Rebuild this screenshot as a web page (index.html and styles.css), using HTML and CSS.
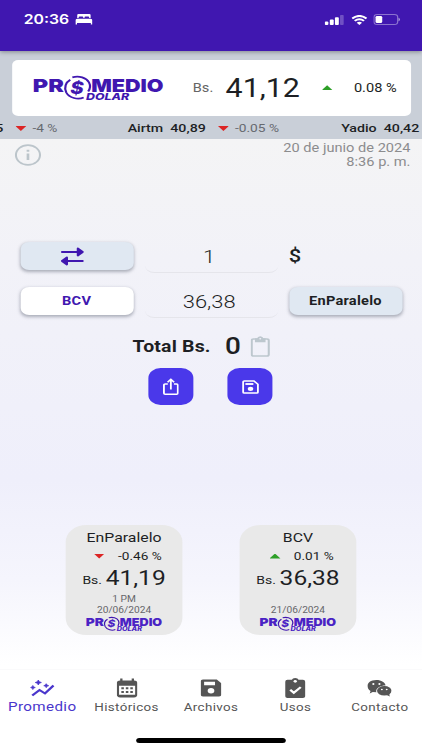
FILE: index.html
```html
<!DOCTYPE html>
<html lang="es">
<head>
    <meta charset="UTF-8">
    <meta name="viewport" content="width=device-width, initial-scale=1.0">
    <title>Promedio Dolar</title>
    <link rel="stylesheet" href="styles.css">
</head>
<body>
    <div class="app">
        <header class="status-bar">
            <span class="time">20:36</span>
            <svg class="bed" width="14" height="11" viewBox="0 0 14 11"><path fill="#fff" d="M2.500 0h9q1 0 1 1v3h-1.200V3.200q0-.8-.8-.8H8.300q-.8 0-.8.8V4h-1v-.8q0-.8-.8-.8H3.500q-.8 0-.8.8V4H1.500V1q0-1 1-1zM1.500 4.700h11q1.500.3 1.500 1.500v4.300h-1.300V9H1.300v1.500H0V6.200q0-1.200 1.500-1.500z"/></svg>
            <div class="status-icons">
                <svg width="16" height="10" viewBox="0 0 16 10" fill="#fff"><rect y="6.500" width="3" height="3.500" rx="1"/><rect x="4.200" y="4.600" width="3.200" height="5.400" rx=".8"/><rect x="8.400" y="2.300" width="3.200" height="7.700" rx=".8"/><rect x="12.600" width="3" height="10" rx=".8" opacity=".25"/></svg>
                <svg width="13" height="10" viewBox="0 0 13 10" fill="none" stroke="#fff" stroke-width="1.900"><path d="M.6 3.500Q6.500-1.700 12.400 3.500M2.700 5.900Q6.500 2.500 10.300 5.900"/><path fill="#fff" stroke="none" d="M4.300 7.700Q6.500 5.800 8.700 7.700L6.500 10z"/></svg>
                <svg width="22" height="11" viewBox="0 0 22 11"><rect x=".5" y=".5" width="19.500" height="10" rx="2.800" fill="none" stroke="#fff" stroke-opacity=".4"/><rect x="1.800" y="1.900" width="5.500" height="7.200" rx="1.300" fill="#fff"/><path fill="#fff" fill-opacity=".5" d="M20.700 3.700q1.300.5 1.300 1.800t-1.300 1.800z"/></svg>
            </div>
        </header>

        <section class="summary">
            <div class="summary-card">
                <svg class="logo" viewBox="0 0 106 24" preserveAspectRatio="none">
                    <g id="logo">
                        <text class="logo-main" x="-1" y="15.500" textLength="25.500" lengthAdjust="spacingAndGlyphs">PR</text>
                        <text class="logo-coin" x="29.700" y="17.600" textLength="11" lengthAdjust="spacingAndGlyphs">$</text>
                        <text class="logo-main" x="47" y="15.500" textLength="59.500" lengthAdjust="spacingAndGlyphs">MEDIO</text>
                        <path class="logo-ring" d="M31.500 1.300C37-.5 43 1.500 45.200 6.500C46.500 9.500 46 13 44.500 15.500M40.800 21.500C36 24 29 22 26.500 16.500C24.500 11.500 26 6.500 29.800 3.800"/>
                        <text class="logo-sub" x="42.700" y="23.600" textLength="35.500" lengthAdjust="spacingAndGlyphs">DOLAR</text>
                    </g>
                </svg>
                <span class="summary-currency">Bs.</span>
                <span class="summary-value">41,12</span>
                <span class="arrow up"></span>
                <span class="summary-change">0.08 %</span>
            </div>
            <div class="ticker">
                <span class="ticker-item first">5 <span class="arrow down"></span><span class="change">-4 %</span></span>
                <span class="ticker-item">Airtm&nbsp; 40,89 <span class="arrow down"></span><span class="change">-0.05 %</span></span>
                <span class="ticker-item last">Yadio&nbsp; 40,42</span>
            </div>
        </section>

        <main>
            <div class="info-row">
                <svg width="22" height="22" viewBox="0 0 22 22" fill="none" stroke="#bcc5cb" stroke-width="1.700"><circle cx="11" cy="11" r="9.900"/><path stroke-width="2.200" d="M11 9.500v6.500M11 5.800v2"/></svg>
                <div class="date">20 de junio de 2024<br>8:36 p. m.</div>
            </div>

            <div class="converter">
                <button class="rate-button tinted swap" aria-label="Cambiar">
                    <svg width="19" height="19" viewBox="0 0 19 19" fill="none" stroke="#4017b0" stroke-width="1.800" stroke-linecap="round" stroke-linejoin="round"><path d="M1 5h14M18 14H4"/><path fill="#4017b0" d="M14 1.500L18 5l-4 3.500zM5 10.500L1 14l4 3.500z"/></svg>
                </button>
                <div class="field">1</div>
                <span class="dollar">$</span>
                <button class="rate-button selected">BCV</button>
                <div class="field">36,38</div>
                <button class="rate-button tinted">EnParalelo</button>
            </div>

            <div class="total">
                <span class="total-label">Total Bs.</span>
                <span class="total-value">0</span>
                <svg width="16" height="21" viewBox="0 0 16 21" fill="none" stroke="#bdc7ce" stroke-width="1.700"><rect x="1" y="3" width="14" height="17" rx="1.500"/><path fill="#bdc7ce" d="M4.500 3H6Q6.500 1 8 1T10 3H11.500V5.500H4.500z"/><circle cx="8" cy="2.800" r=".8" fill="#f0f0f9" stroke="none"/></svg>
            </div>

            <div class="actions">
                <button class="action" aria-label="Compartir"><svg width="13" height="17" viewBox="0 0 13 17" fill="none" stroke="#fff" stroke-width="1.500"><path d="M4 6H1.800Q.8 6 .8 7V15.200Q.8 16.200 1.800 16.200H11.200Q12.200 16.200 12.200 15.200V7Q12.200 6 11.200 6H9M6.500 11.500V2M3.800 4.200L6.500 1.300L9.200 4.200"/></svg></button>
                <button class="action" aria-label="Guardar"><svg width="14" height="14" viewBox="0 0 15 15" fill="none" stroke="#fff" stroke-width="1.600"><path d="M2 1H10.500L14 4.500V13Q14 14 13 14H2Q1 14 1 13V2Q1 1 2 1z"/><path stroke-width="2" d="M3 4.300H10"/><circle cx="7.500" cy="9.500" r="2.400" fill="#fff" stroke="none"/></svg></button>
            </div>

            <div class="cards">
                <article class="card">
                    <h2>EnParalelo</h2>
                    <div class="card-change"><span class="arrow down"></span>-0.46 %</div>
                    <div class="card-value"><small>Bs.</small>41,19</div>
                    <div class="card-time">1 PM</div>
                    <div class="card-date">20/06/2024</div>
                    <svg class="logo" viewBox="0 0 106 24" preserveAspectRatio="none"><use href="#logo"/></svg>
                </article>
                <article class="card">
                    <h2>BCV</h2>
                    <div class="card-change"><span class="arrow up"></span>0.01 %</div>
                    <div class="card-value"><small>Bs.</small>36,38</div>
                    <div class="card-time"></div>
                    <div class="card-date">21/06/2024</div>
                    <svg class="logo" viewBox="0 0 106 24" preserveAspectRatio="none"><use href="#logo"/></svg>
                </article>
            </div>
        </main>

        <nav class="tabs">
            <a class="tab active">
                <svg width="20" height="18" viewBox="0 0 20 18" fill="none" stroke="currentColor" stroke-width="2"><path d="M1.500 16.500L7.500 11L12 14.500L19 6.500"/><path fill="currentColor" stroke-width=".7" d="M6.500 1L7.300 2.700L9 3.500L7.300 4.300L6.500 6L5.700 4.300L4 3.500L5.700 2.700zM2 6.500L2.600 7.900L4 8.500L2.600 9.100L2 10.500L1.400 9.100L0 8.500L1.400 7.900zM13 4.700L13.600 6L15 6.700L13.600 7.300L13 8.700L12.400 7.300L11 6.700L12.400 6z"/></svg>
                <span>Promedio</span>
            </a>
            <a class="tab">
                <svg width="17" height="19" viewBox="0 0 18 20"><path fill="currentColor" d="M3 0h2v2h8V0h2v2q3 0 3 3v12q0 3-3 3H3q-3 0-3-3V5q0-3 3-3z"/><path fill="#fff" d="M2 7.500h14v9.700H2z"/><path stroke="currentColor" stroke-width="2" stroke-dasharray="2.200 1.700" d="M4 10.300h10M4 14.300h10"/></svg>
                <span>Históricos</span>
            </a>
            <a class="tab">
                <svg width="17" height="17" viewBox="0 0 18 18"><path fill="currentColor" d="M2 0h12l4 4v12q0 2-2 2H2q-2 0-2-2V2q0-2 2-2z"/><path fill="#fff" d="M3 2.500h9.500v3.700H3z"/><circle cx="9" cy="12" r="2.900" fill="#fff"/></svg>
                <span>Archivos</span>
            </a>
            <a class="tab">
                <svg width="17.500" height="22" viewBox="0 0 18 22"><path fill="currentColor" d="M2 2h4q.5-2 3-2t3 2h4q2 0 2 2v16q0 2-2 2H2q-2 0-2-2V4q0-2 2-2z"/><circle cx="9" cy="3.700" r="1.500" fill="#fff"/><path fill="none" stroke="#fff" stroke-width="2.200" d="M4.500 13l3.200 3.300L14 10"/></svg>
                <span>Usos</span>
            </a>
            <a class="tab">
                <svg width="20" height="18" viewBox="0 0 20 18"><path fill="currentColor" d="M7.500 1C11.500 1 15 3.500 15 6.500C10 6.500 6.500 10 7.500 13.300L4.500 13L2 14.500L2.700 12C-2 8 0 1 7.500 1z"/><ellipse cx="14" cy="11.800" rx="6" ry="4.800" fill="currentColor"/><path fill="currentColor" d="M16 16l2.500 1.500-.5-3z"/><g fill="#fff"><circle cx="5" cy="5" r=".9"/><circle cx="10" cy="5" r=".9"/><circle cx="12" cy="10.500" r=".8"/><circle cx="16" cy="10.500" r=".8"/></g></svg>
                <span>Contacto</span>
            </a>
        </nav>
        <div class="home-indicator"></div>
    </div>
</body>
</html>
```
FILE: styles.css
```css
* {
    box-sizing: border-box;
}
body {
    margin: 0;
    overflow: hidden;
    background-color: #ffffff;
}
/* laid out at 347px, widened to fill a 422px screen */
.app {
    display: flex;
    flex-direction: column;
    width: 347px;
    height: 750px;
    overflow: hidden;
    transform: scaleX(1.21614);
    transform-origin: 0 0;
    font-family: Roboto, "Liberation Sans", sans-serif;
    font-size: 12px;
    color: #1d1f24;
    background: linear-gradient(#f4f4f5 139px, #f2f2f8 260px, #efeffb 480px, #f5f5fd 580px, #ffffff 665px);
}
svg {
    display: block;
    flex: none;
}
button {
    font-family: inherit;
    border: none;
    padding: 0;
    display: flex;
    align-items: center;
    justify-content: center;
}
.status-bar {
    height: 51px;
    flex: none;
    display: flex;
    align-items: flex-start;
    padding: 11px 18px 0 19.5px;
    background-color: #4017b0;
    box-shadow: 0 1px 4px rgba(0, 0, 0, 0.35);
    z-index: 1;
}
.time {
    width: 38px;
    font: 600 13px/17px Inter, sans-serif;
    color: #ffffff;
}
.bed {
    margin: 3px 0 0 4px;
}
.status-icons {
    display: flex;
    align-items: center;
    gap: 5.5px;
    margin: 3px 0 0 auto;
}
.summary {
    height: 88px;
    flex: none;
    background-color: #c9cfd8;
    padding-top: 9px;
}
.summary-card {
    height: 55.5px;
    margin: 0 9.5px;
    padding-left: 18px;
    display: flex;
    align-items: center;
    background-color: #ffffff;
    border-radius: 5px;
}
.logo {
    width: 106px;
    height: 24px;
    overflow: visible;
    fill: #4017b0;
}
.logo-main {
    font: 900 18px Inter, sans-serif;
}
.logo-coin {
    font: italic 800 17px Inter, sans-serif;
}
.logo-sub {
    font: italic 800 9.5px Inter, sans-serif;
}
.logo-ring {
    fill: none;
    stroke: #4017b0;
    stroke-width: 1.8;
}
.summary-currency {
    width: 27px;
    margin-left: 25px;
    color: #666666;
}
.summary-value {
    width: 79px;
    padding-top: 1px;
    font-size: 25px;
}
.summary-change {
    margin-left: 17.5px;
}
.arrow {
    display: inline-block;
    width: 9px;
    height: 5px;
    flex: none;
}
.up {
    background-color: #2d9f27;
    clip-path: polygon(50% 0, 100% 100%, 0 100%);
}
.down {
    background-color: #dc2525;
    clip-path: polygon(0 0, 100% 0, 50% 100%);
}
.ticker {
    height: 24px;
    padding-top: 1px;
    display: flex;
    align-items: center;
    overflow: hidden;
    white-space: nowrap;
    font-size: 11.7px;
}
.ticker-item {
    display: flex;
    align-items: center;
    width: 175.5px;
    flex: none;
    font-weight: 500;
}
.ticker-item.first {
    width: 109px;
    margin-left: -4px;
}
.ticker-item.last {
    width: auto;
}
.ticker .arrow {
    margin: 1px 5px 0 10px;
}
.ticker .change {
    font-weight: 400;
    font-size: 11.3px;
    color: #66696f;
}
main {
    flex: 1;
}
.info-row {
    display: flex;
    justify-content: space-between;
    padding: 5px 9.5px 0 11.5px;
    height: 103px;
}
.date {
    margin-top: -3px;
    text-align: right;
    line-height: 14px;
    color: #8c8c8e;
}
.converter {
    display: grid;
    grid-template-columns: 93px 110px 93px;
    grid-template-rows: 28px 28px;
    gap: 17px 9px;
    padding-left: 16.5px;
}
.rate-button {
    border-radius: 7px;
    box-shadow: 0 1.5px 3px rgba(40, 50, 70, 0.35);
    font-size: 12px;
    font-weight: 700;
    color: #1d1f24;
    letter-spacing: 0.2px;
}
.swap {
    padding-right: 8px;
}
.tinted {
    background-color: #e0e8f2;
}
.selected {
    background-color: #ffffff;
    color: #4017b0;
}
.field {
    height: 31px;
    padding-right: 3px;
    border-bottom: 1px solid #e5e5eb;
    border-radius: 8px;
    font-size: 18px;
    font-weight: 300;
    line-height: 29px;
    text-align: center;
}
.dollar {
    font-size: 18px;
    font-weight: 500;
    line-height: 28px;
}
.total {
    display: flex;
    align-items: center;
    height: 22px;
    margin: 20px 0 0 109px;
}
.total-label {
    width: 76px;
    font-size: 16px;
    font-weight: 700;
    letter-spacing: 0.15px;
}
.total-value {
    width: 21px;
    font-size: 23px;
    font-weight: 500;
}
.actions {
    display: flex;
    justify-content: center;
    gap: 28px;
    margin: 11px 1px 0 0;
}
.action {
    width: 37px;
    height: 37px;
    border-radius: 10px;
    background-color: #4a38ea;
}
.cards {
    display: flex;
    gap: 47px;
    padding: 120px 0 0 54px;
}
.card {
    width: 96px;
    height: 110px;
    display: flex;
    flex-direction: column;
    align-items: center;
    border-radius: 17px;
    background-color: #e9e9e9;
}
.card h2 {
    margin: 4px 0 0;
    font-size: 13px;
    font-weight: 400;
    line-height: 18px;
}
.card-change {
    display: flex;
    align-items: center;
    gap: 11px;
    height: 18px;
    padding-left: 6px;
    font-size: 11.2px;
}
.card-value {
    font-size: 20.2px;
    line-height: 27px;
}
.card-value small {
    font-size: 11.5px;
    margin-right: 3px;
    vertical-align: 1px;
}
.card-time,
.card-date {
    height: 11px;
    font-size: 8.4px;
    line-height: 11px;
    color: #66666a;
}
.card .logo {
    width: 62px;
    height: 14px;
    margin-top: 1px;
    fill: #4a22c4;
}
.tabs {
    height: 81px;
    flex: none;
    display: flex;
    border-top: 1px solid #fafafb;
    background-color: #ffffff;
}
.tab {
    flex: 1;
    display: flex;
    flex-direction: column;
    align-items: center;
    color: #555555;
    font-size: 11px;
    letter-spacing: 0.3px;
}
.tab svg {
    height: 20px;
    margin-top: 8px;
}
.tab span {
    margin-top: 3px;
    line-height: 14px;
}
.tab.active {
    color: #4a36cc;
}
.tab.active span {
    margin-top: 2px;
    font-size: 12.5px;
}
.home-indicator {
    position: absolute;
    left: 112px;
    top: 738px;
    width: 123px;
    height: 4.5px;
    border-radius: 3px;
    background-color: #000000;
}
```
